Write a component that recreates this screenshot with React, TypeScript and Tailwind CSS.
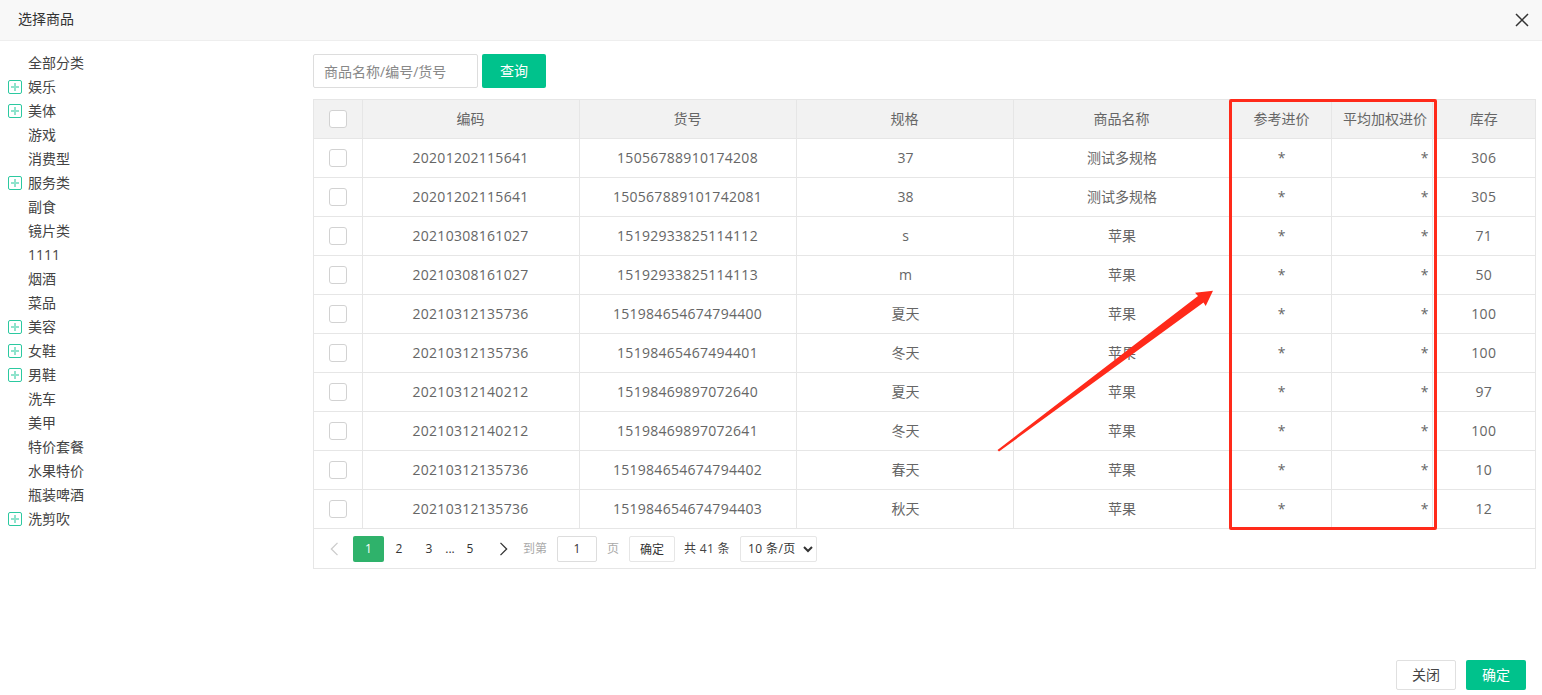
const categories = [
  { name: "全部分类" },
  { name: "娱乐", more: true },
  { name: "美体", more: true },
  { name: "游戏" },
  { name: "消费型" },
  { name: "服务类", more: true },
  { name: "副食" },
  { name: "镜片类" },
  { name: "1111" },
  { name: "烟酒" },
  { name: "菜品" },
  { name: "美容", more: true },
  { name: "女鞋", more: true },
  { name: "男鞋", more: true },
  { name: "洗车" },
  { name: "美甲" },
  { name: "特价套餐" },
  { name: "水果特价" },
  { name: "瓶装啤酒" },
  { name: "洗剪吹", more: true },
];

const rows = [
  ["20201202115641", "15056788910174208", "37", "测试多规格", "306"],
  ["20201202115641", "150567889101742081", "38", "测试多规格", "305"],
  ["20210308161027", "15192933825114112", "s", "苹果", "71"],
  ["20210308161027", "15192933825114113", "m", "苹果", "50"],
  ["20210312135736", "151984654674794400", "夏天", "苹果", "100"],
  ["20210312135736", "15198465467494401", "冬天", "苹果", "100"],
  ["20210312140212", "15198469897072640", "夏天", "苹果", "97"],
  ["20210312140212", "15198469897072641", "冬天", "苹果", "100"],
  ["20210312135736", "151984654674794402", "春天", "苹果", "10"],
  ["20210312135736", "151984654674794403", "秋天", "苹果", "12"],
];

function PlusBox() {
  return (
    <span className="relative mr-1.5 h-[14px] w-[14px] shrink-0 rounded-[2px] border border-[#2cc9a0]">
      <span className="absolute left-[2px] top-[5px] h-[2px] w-2 bg-[#8fe3cc]" />
      <span className="absolute left-[5px] top-[2px] h-2 w-[2px] bg-[#8fe3cc]" />
    </span>
  );
}

function Check() {
  return <input type="checkbox" className="block h-[18px] w-[18px] appearance-none rounded-[3px] border border-[#d2d2d2] bg-white" />;
}

export default function App() {
  return (
    <div
      className="relative flex h-[695px] w-[1542px] flex-col overflow-hidden bg-white text-sm text-[#666]"
      style={{ fontFamily: '"Open Sans", "Noto Sans CJK SC", sans-serif' }}
    >
      <header className="flex h-[41px] shrink-0 items-center justify-between border-b border-[#eee] bg-[#f8f8f8] pb-[3px] pl-[18px] pr-[13px]">
        <span className="text-sm text-[#333]">选择商品</span>
        <svg viewBox="0 0 14 14" className="mt-[3px] h-[14px] w-[14px] text-[#333]" fill="none" stroke="currentColor" strokeWidth="1.5">
          <path d="M1 1l12 12M13 1L1 13" />
        </svg>
      </header>

      <div className="flex flex-1">
        <aside className="w-[313px] shrink-0 pt-[10px]">
          {categories.map((c) => (
            <div key={c.name} className="flex h-6 items-center pl-2 text-[#444]">
              {c.more ? <PlusBox /> : <span className="mr-1.5 w-[14px] shrink-0" />}
              <span>{c.name}</span>
            </div>
          ))}
        </aside>

        <main className="w-[1223px] pt-[13px]">
          <div className="flex gap-1">
            <input
              className="h-[34px] w-[165px] rounded-[2px] border border-[#ddd] px-[10px] text-sm outline-none placeholder:text-[#888]"
              placeholder="商品名称/编号/货号"
            />
            <button className="h-[34px] w-16 rounded-[2px] bg-[#00c28c] text-sm text-white">查询</button>
          </div>

          <div className="mt-[11px] h-[470px] border border-[#e6e6e6]">
            <table className="w-full table-fixed border-collapse">
              <colgroup>
                <col className="w-[48px]" />
                <col className="w-[217px]" />
                <col className="w-[217px]" />
                <col className="w-[217px]" />
                <col className="w-[217px]" />
                <col className="w-[101px]" />
                <col className="w-[101px]" />
                <col />
              </colgroup>
              <thead>
                <tr className="h-[38px] bg-[#f2f2f2] text-sm">
                  <th className="border-r border-b border-[#e6e6e6] pl-[15px]">
                    <Check />
                  </th>
                  <th className="border-r border-b border-[#e6e6e6] font-normal">编码</th>
                  <th className="border-r border-b border-[#e6e6e6] font-normal">货号</th>
                  <th className="border-r border-b border-[#e6e6e6] font-normal">规格</th>
                  <th className="border-r border-b border-[#e6e6e6] font-normal">商品名称</th>
                  <th className="border-r border-b border-[#e6e6e6] pl-[2px] font-normal">参考进价</th>
                  <th className="border-r border-b border-[#e6e6e6] pl-[7px] font-normal">平均加权进价</th>
                  <th className="border-b border-[#e6e6e6] font-normal">库存</th>
                </tr>
              </thead>
              <tbody>
                {rows.map((r, i) => (
                  <tr key={i} className="h-[39px]">
                    <td className="border-r border-b border-[#e6e6e6] pl-[15px]">
                      <Check />
                    </td>
                    <td className="border-r border-b border-[#e6e6e6] text-center tracking-[0.28px]">{r[0]}</td>
                    <td className="border-r border-b border-[#e6e6e6] text-center tracking-[0.28px]">{r[1]}</td>
                    <td className="border-r border-b border-[#e6e6e6] pl-[2px] text-center">{r[2]}</td>
                    <td className="border-r border-b border-[#e6e6e6] pl-[1px] text-center">{r[3]}</td>
                    <td className="border-r border-b border-[#e6e6e6] pl-[2px] text-center">*</td>
                    <td className="border-r border-b border-[#e6e6e6] pr-[3px] text-right">*</td>
                    <td className="border-b border-[#e6e6e6] text-center tracking-[0.28px]">{r[4]}</td>
                  </tr>
                ))}
              </tbody>
            </table>

            <div className="flex h-[40px] items-center text-xs">
              <svg viewBox="0 0 10 16" className="ml-[15px] h-[14px] w-[10px]" fill="none" stroke="#ccc" strokeWidth="1.5">
                <path d="M9 1L2 8l7 7" />
              </svg>
              <span className="ml-[14px] flex h-[26px] w-[31px] items-center justify-center rounded-[2px] bg-[#2fb26b] text-white">1</span>
              <span className="w-[30px] text-center text-[#333]">2</span>
              <span className="w-[30px] text-center text-[#333]">3</span>
              <span className="w-[12px] text-center text-[#333]">...</span>
              <span className="w-[28px] text-center text-[#333]">5</span>
              <svg viewBox="0 0 10 16" className="ml-[15px] h-[14px] w-[10px]" fill="none" stroke="#333" strokeWidth="1.5">
                <path d="M1 1l7 7-7 7" />
              </svg>
              <span className="ml-[14px] text-[#aaa]">到第</span>
              <span className="ml-[10px] flex h-[26px] w-10 items-center justify-center rounded-[2px] border border-[#ddd] text-[#333]">1</span>
              <span className="ml-[10px] text-[#aaa]">页</span>
              <button className="ml-[10px] h-[26px] w-[46px] rounded-[2px] border border-[#e6e6e6] pt-[3px] text-xs text-[#333]">确定</button>
              <span className="ml-[9px] w-[46px] text-[#444] tracking-[0.3px]">共 41 条</span>
              <select className="ml-[10px] h-[26px] w-[77px] rounded-[2px] border border-[#e6e6e6] bg-white pl-[3px] text-xs tracking-[0.4px] text-[#333]">
                <option>10 条/页</option>
              </select>
            </div>
          </div>
        </main>
      </div>

      <footer className="flex shrink-0 justify-end gap-[10px] pb-[5px] pr-4">
        <button className="h-[30px] w-[60px] rounded-[2px] border border-[#e0e0e0] bg-white text-sm text-[#444]">关闭</button>
        <button className="h-[30px] w-[60px] rounded-[2px] bg-[#00c28c] text-sm text-white">确定</button>
      </footer>

      <div className="absolute left-[1229px] top-[99px] h-[431px] w-[208px] rounded-[2px] border-[3px] border-[#ff2a1a]" />
      <svg className="absolute left-[990px] top-[285px] h-[170px] w-[230px]" viewBox="990 285 230 170">
        <polygon points="997.5,450 1198,296 1195,292.7 1213,290.7 1205.7,306 1203.5,302.5 999,451.5" fill="#ff2a1a" />
      </svg>
    </div>
  );
}
